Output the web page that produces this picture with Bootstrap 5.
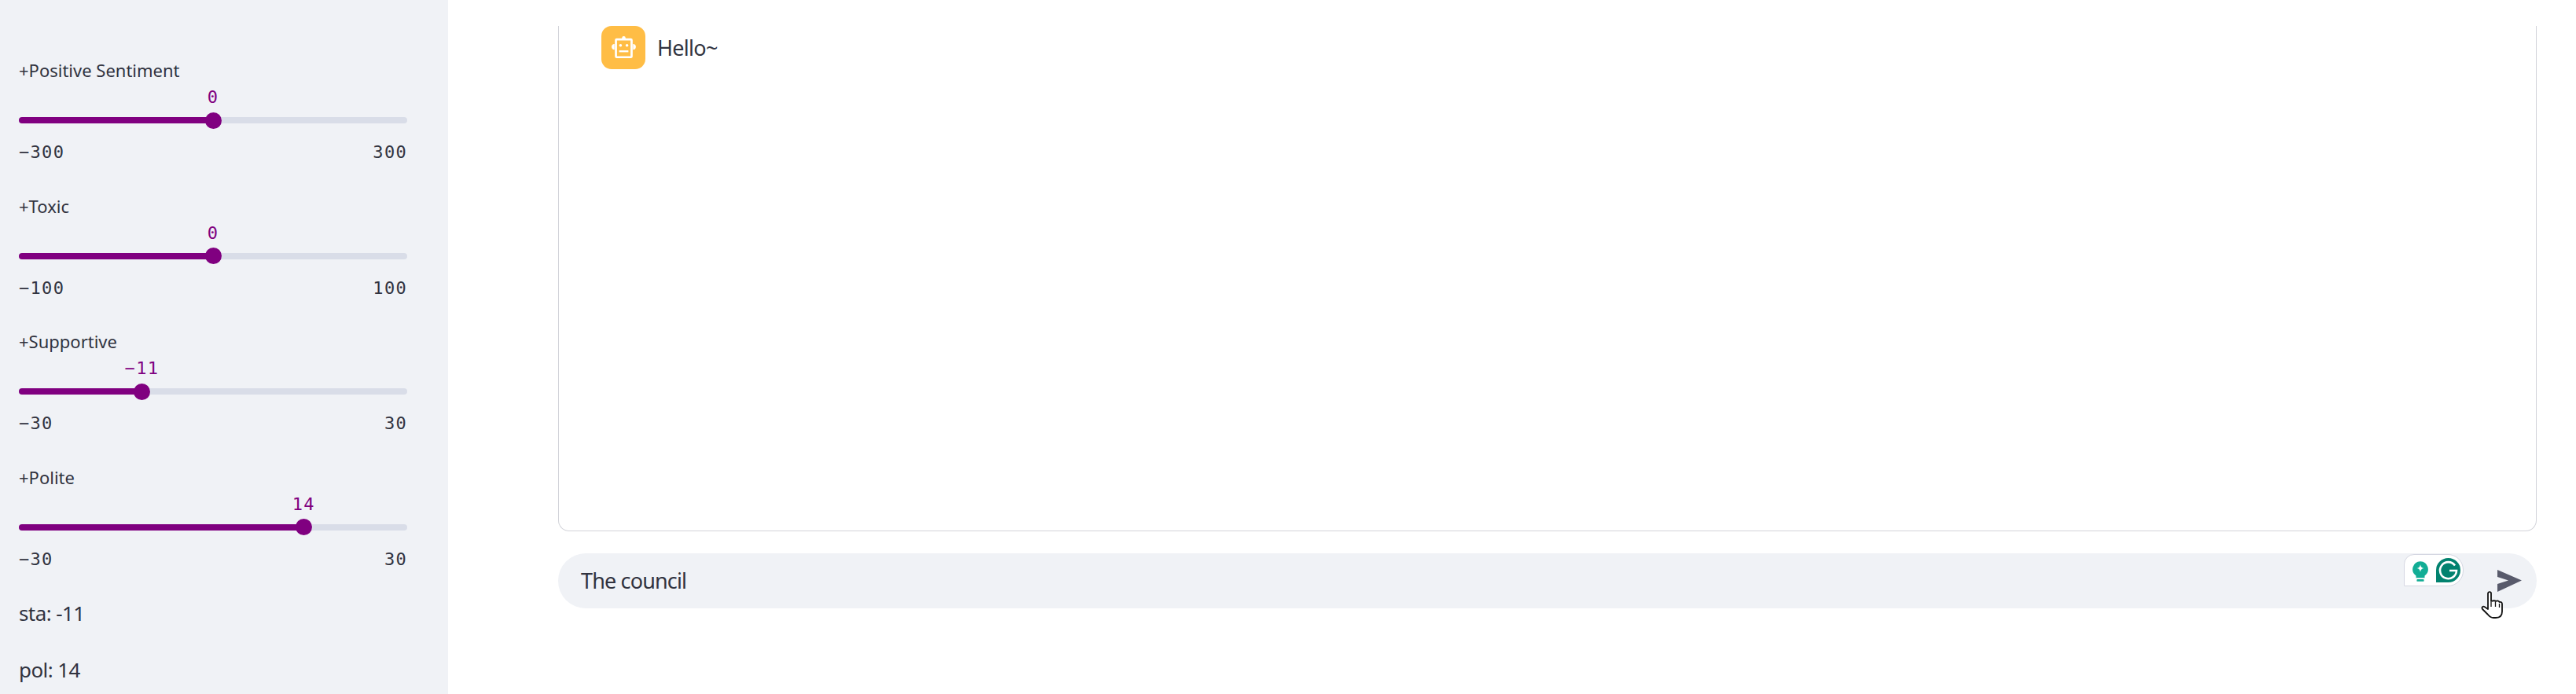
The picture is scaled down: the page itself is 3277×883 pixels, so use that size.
<!DOCTYPE html>
<html lang="en">
<head>
<meta charset="utf-8">
<title>Chat</title>
<link href="https://cdn.jsdelivr.net/npm/bootstrap@5.3.0/dist/css/bootstrap.min.css" rel="stylesheet">
<style>
html,body{height:883px;overflow:hidden;background:#fff;}
body{font-family:"Noto Sans","Open Sans",sans-serif;color:#31333f;}
.side-panel{width:570px;height:883px;background:#f0f2f6;padding:0 52px 0 24px;flex:none;}
.slider-block{height:172.5px;}
.first-block{margin-top:73px;}
.slider-label{font-size:22px;line-height:32px;height:32px;}
.slider-zone{position:relative;height:76px;}
.track-bar{position:absolute;left:0;right:0;top:44px;height:8px;border-radius:4px;background:#d9dde8;}
.track-bar .progress-bar{background:#800080;}
.knob{position:absolute;top:37.5px;width:21px;height:21px;margin-left:-10.5px;border-radius:50%;background:#800080;}
.knob-value{position:absolute;top:6px;transform:translateX(-50%);color:#800080;}
.mono-text{font-family:"DejaVu Sans Mono",monospace;font-size:22px;line-height:26px;letter-spacing:1.3px;}
.limits{color:#31333f;}
.stat-line{font-size:26px;line-height:36px;letter-spacing:-.6px;}
.main-pane{flex:1;min-width:0;padding:33px 50px 0 140px;}
.chat-box{height:643px;border:1px solid #d2d3d9;border-top:0;border-radius:0 0 14px 14px;padding:0 54px;overflow:hidden;}
.bot-avatar{width:56px;height:55px;border-radius:13px;background:#ffbd45;flex:none;}
.bot-text{font-size:27px;line-height:54px;margin-left:15px;letter-spacing:-.7px;}
.input-pill{position:relative;height:70px;margin-top:28px;border-radius:35px;background:#f0f2f6;padding:0 29px;font-size:27px;line-height:70px;letter-spacing:-.85px;}
.gram-widget{position:absolute;left:2348px;top:1px;width:76px;height:41px;background:#fff;border:1px solid #d5d7e2;border-radius:13px 20px 20px 1px;}
.send-icon{position:absolute;left:2466px;top:21px;}
.hand-cursor{position:absolute;left:2446px;top:48px;}
</style>
</head>
<body>
<div class="d-flex">
  <aside class="side-panel">
    <div class="slider-block first-block">
      <div class="slider-label">+Positive Sentiment</div>
      <div class="slider-zone">
        <div class="progress track-bar"><div class="progress-bar" style="width:50%"></div></div>
        <div class="knob" style="left:50%"></div>
        <div class="knob-value mono-text" style="left:50%">0</div>
      </div>
      <div class="d-flex justify-content-between limits mono-text"><span>−300</span><span>300</span></div>
    </div>
    <div class="slider-block">
      <div class="slider-label">+Toxic</div>
      <div class="slider-zone">
        <div class="progress track-bar"><div class="progress-bar" style="width:50%"></div></div>
        <div class="knob" style="left:50%"></div>
        <div class="knob-value mono-text" style="left:50%">0</div>
      </div>
      <div class="d-flex justify-content-between limits mono-text"><span>−100</span><span>100</span></div>
    </div>
    <div class="slider-block">
      <div class="slider-label">+Supportive</div>
      <div class="slider-zone">
        <div class="progress track-bar"><div class="progress-bar" style="width:31.67%"></div></div>
        <div class="knob" style="left:31.67%"></div>
        <div class="knob-value mono-text" style="left:31.67%">−11</div>
      </div>
      <div class="d-flex justify-content-between limits mono-text"><span>−30</span><span>30</span></div>
    </div>
    <div class="slider-block">
      <div class="slider-label">+Polite</div>
      <div class="slider-zone">
        <div class="progress track-bar"><div class="progress-bar" style="width:73.33%"></div></div>
        <div class="knob" style="left:73.33%"></div>
        <div class="knob-value mono-text" style="left:73.33%">14</div>
      </div>
      <div class="d-flex justify-content-between limits mono-text"><span>−30</span><span>30</span></div>
    </div>
    <div class="stat-line" style="margin-top:-1px">sta: -11</div>
    <div class="stat-line" style="margin-top:36px">pol: 14</div>
  </aside>
  <main class="main-pane">
    <div class="chat-box">
      <div class="d-flex align-items-center">
        <div class="bot-avatar d-flex align-items-center justify-content-center">
          <svg width="33" height="29" viewBox="0 0 36 32" fill="#fff"><circle cx="18" cy="2.5" r="2.5"/><path d="M5 11a4 4 0 0 0 0 8zM31 11a4 4 0 0 1 0 8z"/><path fill-rule="evenodd" d="M8 3h20a2.500 2.500 0 0 1 2.500 2.500v23a2.500 2.500 0 0 1-2.500 2.500H8a2.500 2.500 0 0 1-2.500-2.500v-23A2.500 2.500 0 0 1 8 3zm.5 3v22h19V6z"/><circle cx="13.500" cy="13" r="2"/><circle cx="22.500" cy="13" r="2"/><rect x="11.500" y="20" width="13" height="2.500"/></svg>
        </div>
        <div class="bot-text">Hello~</div>
      </div>
    </div>
    <div class="input-pill">
      The council
      <div class="gram-widget d-flex align-items-start">
        <svg style="margin:8px 0 0 9px" width="22" height="26" viewBox="0 0 24 28"><path fill="#12ad95" d="M12 0a11 11 0 0 1 6 20v3H6v-3A11 11 0 0 1 12 0z"/><path fill="#fff" d="M12 4.500c.8 3.600 1.600 4.400 5 5.200-3.400.8-4.200 1.600-5 5.200-.8-3.600-1.600-4.400-5-5.200 3.400-.8 4.200-1.600 5-5.200z"/><rect x="7" y="25" width="10" height="3" rx="1" fill="#12ad95"/></svg>
        <svg style="margin:4px 0 0 9px" width="31" height="31" viewBox="0 0 31 31"><path fill="#02826f" d="M15.500 0a15.500 15.500 0 0 1 0 31H0V15.500A15.500 15.500 0 0 1 15.500 0z"/><path fill="none" stroke="#fff" stroke-width="2.600" d="M24 9.500a10.500 10.500 0 1 0 2 6.500h-9"/></svg>
      </div>
      <svg class="send-icon" width="32" height="28" viewBox="0 0 32 28"><path fill="#585a6b" d="M1 0l31 13.500L1 28v-10l14-4.500L1 9z"/></svg>
      <svg class="hand-cursor" width="28" height="36" viewBox="0 0 28 36"><path fill="#fff" stroke="#111" stroke-width="1.800" stroke-linejoin="round" d="M9 3c0-2.500 4-2.500 4 0v10c3-1 5-1 6 0 2-1 4-.5 4.500 1 2-.5 3.500.5 3.500 2.500V26c0 5-3 8-8 8h-3c-3 0-5-1.500-7-4L2 23c-1.500-2 .5-4 2.500-3L9 23z"/><path stroke="#111" stroke-width="1.300" d="M13 14v6M18.500 14v6M23.500 16v5"/></svg>
    </div>
  </main>
</div>
<script src="https://cdn.jsdelivr.net/npm/bootstrap@5.3.0/dist/js/bootstrap.bundle.min.js"></script>
</body>
</html>
